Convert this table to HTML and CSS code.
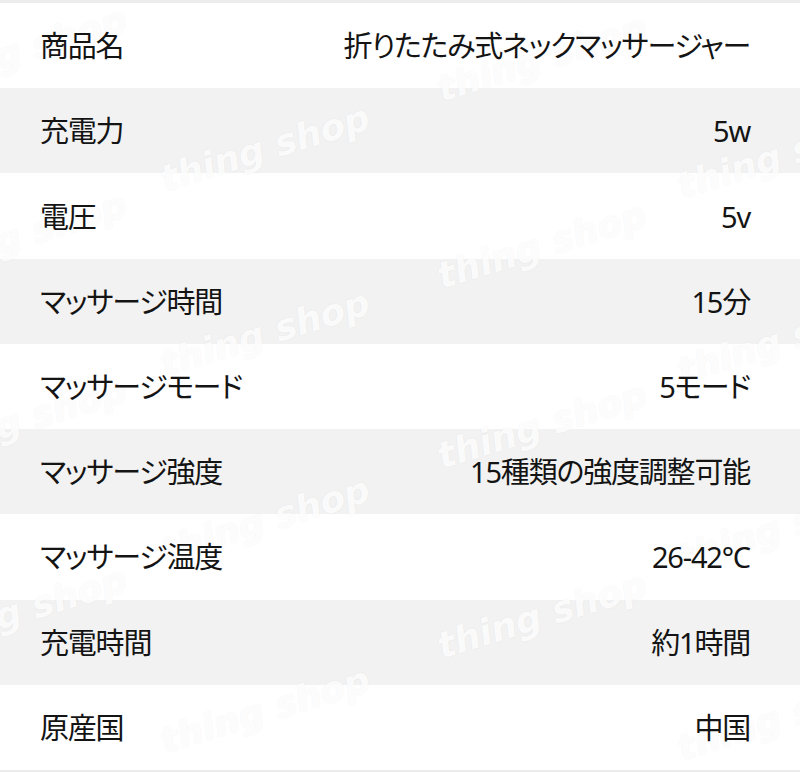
FILE: index.html
```html
<!DOCTYPE html>
<html lang="ja">
<head>
<meta charset="utf-8">
<title>仕様</title>
<link rel="stylesheet" href="styles.css">
</head>
<body>
<div class="page">
  <div class="spec">
    <div class="row"><span class="label">商品名</span><span class="value">折りたたみ式ネックマッサージャー</span></div>
    <div class="row alt"><span class="label">充電力</span><span class="value">5w</span></div>
    <div class="row"><span class="label">電圧</span><span class="value">5v</span></div>
    <div class="row alt"><span class="label">マッサージ時間</span><span class="value">15分</span></div>
    <div class="row"><span class="label">マッサージモード</span><span class="value">5モード</span></div>
    <div class="row alt"><span class="label">マッサージ強度</span><span class="value">15種類の強度調整可能</span></div>
    <div class="row"><span class="label">マッサージ温度</span><span class="value">26-42°C</span></div>
    <div class="row alt"><span class="label">充電時間</span><span class="value">約1時間</span></div>
    <div class="row"><span class="label">原産国</span><span class="value">中国</span></div>
  </div>
  <div class="marks" aria-hidden="true">
    <span class="wm a1">thing shop</span>
    <span class="wm a2">thing shop</span>
    <span class="wm a3">thing shop</span>
    <span class="wm a4">thing shop</span>
    <span class="wm b1">thing shop</span>
    <span class="wm b2">thing shop</span>
    <span class="wm b3">thing shop</span>
    <span class="wm b4">thing shop</span>
    <span class="wm c1">thing shop</span>
    <span class="wm c2">thing shop</span>
    <span class="wm c3">thing shop</span>
    <span class="wm c4">thing shop</span>
    <span class="wm d1">thing shop</span>
    <span class="wm d2">thing shop</span>
    <span class="wm d3">thing shop</span>
    <span class="wm d4">thing shop</span>
  </div>
</div>
</body>
</html>
```

FILE: styles.css
```css
html, body {
  margin: 0;
  padding: 0;
  background: #ffffff;
}

.page {
  position: relative;
  width: 800px;
  height: 772px;
  overflow: hidden;
  font-family: "Noto Sans", "Noto Sans CJK JP", sans-serif;
  font-feature-settings: "palt";
  color: #141414;
}

.spec {
  display: flex;
  flex-direction: column;
  height: 767px;
  border-top: 3px solid #ececec;
  border-bottom: 2px solid #ececec;
}

.row {
  flex: 1 1 0;
  display: flex;
  align-items: center;
  justify-content: space-between;
  padding: 0 50px 0 40px;
  font-size: 29px;
  letter-spacing: -1.2px;
  line-height: 1;
  background: #ffffff;
}

.row.alt {
  background: #f2f2f2;
}

.label,
.value {
  position: relative;
  z-index: 2;
}

.marks {
  position: absolute;
  inset: 0;
  z-index: 1;
  pointer-events: none;
}

.wm {
  position: absolute;
  transform: translate(-50%, -50%) rotate(-17deg);
  font-family: "DejaVu Sans", sans-serif;
  font-weight: bold;
  font-style: oblique;
  font-size: 36px;
  white-space: nowrap;
  color: rgba(255, 255, 255, 0.85);
  text-shadow: 0 0 2px rgba(0, 0, 0, 0.06);
}

.a1 { left: 265px; top: 148px; }
.a2 { left: 265px; top: 333px; }
.a3 { left: 265px; top: 520px; }
.a4 { left: 265px; top: 710px; }
.b1 { left: 542px; top: 58px; }
.b2 { left: 542px; top: 245px; }
.b3 { left: 542px; top: 425px; }
.b4 { left: 542px; top: 615px; }
.c1 { left: 782px; top: 155px; }
.c2 { left: 782px; top: 340px; }
.c3 { left: 782px; top: 527px; }
.c4 { left: 782px; top: 717px; }
.d1 { left: 22px; top: 50px; }
.d2 { left: 22px; top: 235px; }
.d3 { left: 22px; top: 420px; }
.d4 { left: 22px; top: 610px; }
```
